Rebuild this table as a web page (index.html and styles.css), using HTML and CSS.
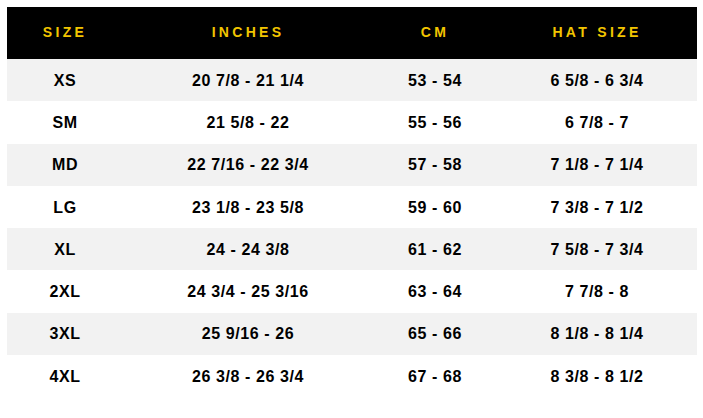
FILE: index.html
```html
<!DOCTYPE html>
<html>
<head>
<meta charset="utf-8">
<link rel="stylesheet" href="styles.css">
</head>
<body>
<table class="chart">
  <colgroup>
    <col class="c1"><col class="c2"><col class="c3"><col class="c4">
  </colgroup>
  <thead>
    <tr class="head"><th>SIZE</th><th>INCHES</th><th>CM</th><th>HAT SIZE</th></tr>
  </thead>
  <tbody>
    <tr class="alt"><td>XS</td><td>20 7/8 - 21 1/4</td><td>53 - 54</td><td>6 5/8 - 6 3/4</td></tr>
    <tr><td>SM</td><td>21 5/8 - 22</td><td>55 - 56</td><td>6 7/8 - 7</td></tr>
    <tr class="alt"><td>MD</td><td>22 7/16 - 22 3/4</td><td>57 - 58</td><td>7 1/8 - 7 1/4</td></tr>
    <tr><td>LG</td><td>23 1/8 - 23 5/8</td><td>59 - 60</td><td>7 3/8 - 7 1/2</td></tr>
    <tr class="alt"><td>XL</td><td>24 - 24 3/8</td><td>61 - 62</td><td>7 5/8 - 7 3/4</td></tr>
    <tr><td>2XL</td><td>24 3/4 - 25 3/16</td><td>63 - 64</td><td>7 7/8 - 8</td></tr>
    <tr class="alt"><td>3XL</td><td>25 9/16 - 26</td><td>65 - 66</td><td>8 1/8 - 8 1/4</td></tr>
    <tr><td>4XL</td><td>26 3/8 - 26 3/4</td><td>67 - 68</td><td>8 3/8 - 8 1/2</td></tr>
  </tbody>
</table>
</body>
</html>
```
FILE: styles.css
```css
html, body {
  margin: 0;
  padding: 0;
  background: #ffffff;
}
body {
  padding: 7px 0 0 7px;
  font-family: "Liberation Sans", Arial, sans-serif;
}
.chart {
  width: 690px;
  border-collapse: collapse;
  table-layout: fixed;
}
.c1 { width: 116px; }
.c2 { width: 250px; }
.c3 { width: 124px; }
.c4 { width: 200px; }
.chart th, .chart td {
  padding: 0;
  text-align: center;
  font-weight: bold;
  white-space: nowrap;
}
.head {
  background: #000000;
  height: 52px;
}
.head th {
  color: #f2c500;
  font-size: 14px;
  letter-spacing: 3.3px;
  padding-bottom: 3px;
}
.chart tbody tr {
  height: 42.3px;
}
.chart td {
  color: #000000;
  font-size: 16px;
  letter-spacing: 0.6px;
  padding-top: 1px;
}
.alt {
  background: #f2f2f2;
}
```
